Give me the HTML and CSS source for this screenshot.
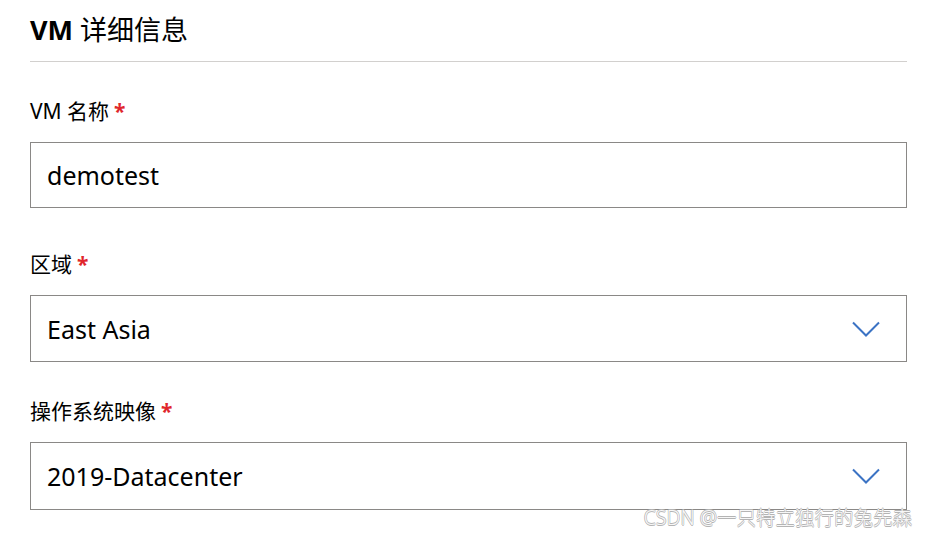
FILE: index.html
```html
<!DOCTYPE html>
<html lang="zh-CN">
<head>
    <meta charset="UTF-8">
    <meta name="viewport" content="width=device-width, initial-scale=1.0">
    <title>VM 详细信息</title>
    <link rel="stylesheet" href="styles.css">
</head>
<body>
    <div class="container">
        <div class="section-title">
            <h1><b>VM</b> 详细信息</h1>
        </div>
        <form class="vm-form">
            <div class="field first">
                <label for="vmName">VM 名称<span class="required">*</span></label>
                <div class="box">
                    <input type="text" id="vmName" value="demotest">
                </div>
            </div>
            <div class="field region">
                <label>区域<span class="required">*</span></label>
                <div class="box select">
                    <span class="value">East Asia</span>
                    <svg class="chevron" width="28" height="16" viewBox="0 0 28 16">
                        <path d="M1 1.5 L14 14.5 L27 1.5" fill="none" stroke="#3b73c4" stroke-width="2"/>
                    </svg>
                </div>
            </div>
            <div class="field image">
                <label>操作系统映像<span class="required">*</span></label>
                <div class="box select">
                    <span class="value">2019-Datacenter</span>
                    <svg class="chevron" width="28" height="16" viewBox="0 0 28 16">
                        <path d="M1 1.5 L14 14.5 L27 1.5" fill="none" stroke="#3b73c4" stroke-width="2"/>
                    </svg>
                </div>
            </div>
        </form>
    </div>
    <div class="watermark">CSDN @一只特立独行的兔先森</div>
</body>
</html>
```
FILE: styles.css
```css
*{
    padding: 0;margin: 0;
    box-sizing: border-box;
}
body{
    font-family: "Noto Sans", "Noto Sans CJK SC", sans-serif;
    color: #000;
    background-color: white;
}
.container{
    padding: 13px 21px 0 30px;
}
.section-title{
    border-bottom: 1px solid #d2d0ce;
    padding-bottom: 15px;
}
h1{
    font-size: 27px;
    line-height: 33px;
    font-weight: normal;
}
h1 b{
    font-weight: 700;
}
.field label{
    display: block;
    font-size: 21px;
    line-height: 28px;
    margin-bottom: 17px;
}
.required{
    color: #e0262b;
    font-weight: bold;
    margin-left: 5px;
}
.field.first{
    margin-top: 35px;
}
.field.region{
    margin-top: 42px;
}
.field.image{
    margin-top: 35px;
}
.box{
    border: 1px solid #8a8886;
    height: 66px;
    display: flex;
    align-items: center;
    padding: 0 26px 0 16px;
}
.box input{
    border: none;
    outline: none;
    font-family: inherit;
    font-size: 25px;
    width: 100%;
    color: #000;
    background: transparent;
}
.select{
    justify-content: space-between;
    height: 67px;
}
.image .select{
    height: 68px;
}
.value{
    font-size: 25px;
}
.chevron{
    display: block;
}
.watermark{
    position: absolute;
    right: 16px;
    top: 502px;
    font-size: 19.5px;
    font-weight: 300;
    color: #f7f7f7;
    text-shadow: 0.6px 0 0 #b4b4b4, -0.6px 0 0 #b4b4b4, 0 0.6px 0 #b4b4b4, 0 -0.6px 0 #b4b4b4;
}
```
